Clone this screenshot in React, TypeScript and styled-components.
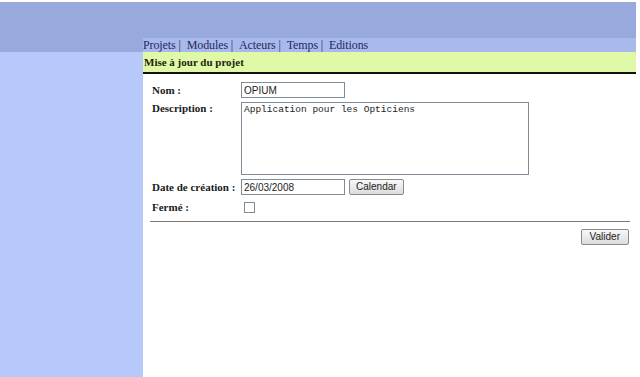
import styled, { createGlobalStyle } from "styled-components";

const Global = createGlobalStyle`
  html, body {
    margin: 0;
    padding: 0;
    background: #ffffff;
  }
`;

const Page = styled.div`
  width: 636px;
  height: 375px;
  padding-top: 2px;
  display: grid;
  grid-template-rows: 36px 14px 1fr;
  grid-template-columns: 143px 1fr;
  grid-template-areas:
    "head head"
    "corner nav"
    "side main";
  font-family: "Liberation Serif", "Times New Roman", serif;
`;

const Head = styled.div`
  grid-area: head;
  background: #98a9dd;
`;

const Corner = styled.div`
  grid-area: corner;
  background: #98a9dd;
`;

const Nav = styled.nav`
  grid-area: nav;
  background: #a9b9ec;
  display: flex;
  align-items: center;
  font-size: 12px;
  color: #232a5e;
  white-space: pre;
  line-height: 14px;
  letter-spacing: -0.1px;
`;

const NavLink = styled.span`
  color: #232a5e;
`;

const Side = styled.div`
  grid-area: side;
  background: #b7c8fb;
`;

const Main = styled.main`
  grid-area: main;
  display: flex;
  flex-direction: column;
`;

const TitleBar = styled.div`
  height: 20px;
  background: #e0f9a6;
  border-bottom: 2px solid #111;
  display: flex;
  align-items: center;
  padding-left: 1px;
  font-weight: bold;
  font-size: 11px;
  color: #1c2410;
`;

const Form = styled.form`
  display: grid;
  grid-template-columns: 89px 1fr;
  row-gap: 4px;
  padding: 8px 0 0 9px;
  align-items: start;
`;

const Label = styled.label<{ $top?: boolean }>`
  font-weight: bold;
  font-size: 11px;
  color: #1a1a1a;
  line-height: ${(p) => (p.$top ? "13px" : "16px")};
  white-space: nowrap;
`;

const Field = styled.div`
  display: flex;
  align-items: flex-start;
  gap: 4px;
  min-height: 16px;
`;

const TextInput = styled.input`
  box-sizing: border-box;
  width: 104px;
  height: 16px;
  border: 1px solid #7f8c99;
  padding: 0 2px;
  font-family: "Liberation Sans", Arial, sans-serif;
  font-size: 10px;
  color: #222;
  margin: 0;
`;

const TextArea = styled.textarea`
  box-sizing: border-box;
  width: 288px;
  height: 73px;
  border: 1px solid #7f8c99;
  padding: 1px 2px;
  font-family: "Liberation Mono", "Courier New", monospace;
  font-size: 9.5px;
  line-height: 11px;
  color: #222;
  resize: none;
  margin: 0;
`;

const Button = styled.button<{ $pad?: number }>`
  box-sizing: border-box;
  height: 16px;
  padding: 0 ${(p) => p.$pad ?? 6}px;
  border: 1px solid #8a8a8a;
  border-radius: 2px;
  background: linear-gradient(#f8f8f8, #dcdcdc);
  font-family: "Liberation Sans", Arial, sans-serif;
  font-size: 10px;
  color: #222;
  line-height: 14px;
  margin: 0;
`;

const Check = styled.span`
  display: inline-block;
  width: 9px;
  height: 9px;
  margin: 3px 0 0 3px;
  border: 1px solid #7f8c99;
  background: #fff;
`;

const Rule = styled.hr`
  margin: 6px 6px 0 7px;
  border: none;
  border-top: 1px solid #7a7a7a;
  height: 0;
`;

const Actions = styled.div`
  display: flex;
  justify-content: flex-end;
  padding: 7px 7px 0 0;
`;

const links = ["Projets", "Modules", "Acteurs", "Temps", "Editions"];

export default function App() {
  return (
    <>
      <Global />
      <Page>
        <Head />
        <Corner />
        <Nav>
          {links.map((l, i) => (
            <span key={l}>
              <NavLink>{l}</NavLink>
              {i < links.length - 1 ? " |  " : ""}
            </span>
          ))}
        </Nav>
        <Side />
        <Main>
          <TitleBar>Mise à jour du projet</TitleBar>
          <Form>
            <Label>Nom :</Label>
            <Field>
              <TextInput defaultValue="OPIUM" />
            </Field>
            <Label $top>Description :</Label>
            <Field>
              <TextArea defaultValue="Application pour les Opticiens" />
            </Field>
            <Label>Date de création :</Label>
            <Field>
              <TextInput defaultValue="26/03/2008" />
              <Button type="button">Calendar</Button>
            </Field>
            <Label>Fermé :</Label>
            <Field>
              <Check />
            </Field>
          </Form>
          <Rule />
          <Actions>
            <Button type="button" $pad={8}>
              Valider
            </Button>
          </Actions>
        </Main>
      </Page>
    </>
  );
}
